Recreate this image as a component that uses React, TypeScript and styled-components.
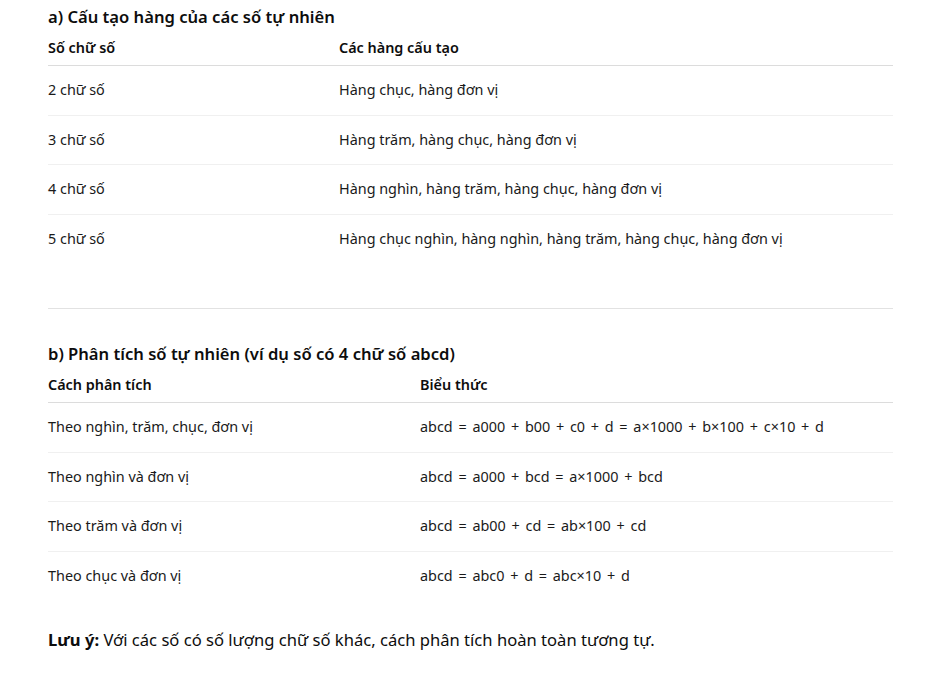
import React from 'react';
import styled, { createGlobalStyle } from 'styled-components';

const GlobalStyle = createGlobalStyle`
  body {
    margin: 0;
    background: #fff;
    font-family: 'Noto Sans', 'Open Sans', sans-serif;
    color: #0d0d0d;
  }
`;

const Page = styled.div`
  width: 845px;
  margin-left: 48px;
  padding-top: 5px;
`;

const Heading = styled.h3`
  margin: 0;
  font-size: 16.6px;
  line-height: 24px;
  font-weight: 600;
`;

const Table = styled.table`
  width: 100%;
  border-collapse: collapse;
  font-size: 14.4px;
  line-height: 20px;
`;

const HeadCell = styled.th<{ $w?: number }>`
  text-align: left;
  font-weight: 600;
  padding: 9px 0 7px;
  border-bottom: 1px solid #dcdcdc;
  width: ${(p) => (p.$w ? `${p.$w}px` : 'auto')};
`;

const Row = styled.tr`
  & + & td {
    border-top: 1px solid #f0f0f0;
  }
`;

const Cell = styled.td`
  padding: 14.25px 0;
  color: #1a1a1a;
`;

const Formula = styled(Cell)`
  word-spacing: 2px;
`;

const Divider = styled.hr`
  border: 0;
  border-top: 1px solid #e2e2e2;
  margin: 45px 0 33px;
`;

const Note = styled.p`
  margin: 28px 0 0;
  font-size: 16.6px;
  line-height: 24px;
`;

const structure = [
  ['2 chữ số', 'Hàng chục, hàng đơn vị'],
  ['3 chữ số', 'Hàng trăm, hàng chục, hàng đơn vị'],
  ['4 chữ số', 'Hàng nghìn, hàng trăm, hàng chục, hàng đơn vị'],
  ['5 chữ số', 'Hàng chục nghìn, hàng nghìn, hàng trăm, hàng chục, hàng đơn vị'],
];

const analysis = [
  ['Theo nghìn, trăm, chục, đơn vị', 'abcd = a000 + b00 + c0 + d = a×1000 + b×100 + c×10 + d'],
  ['Theo nghìn và đơn vị', 'abcd = a000 + bcd = a×1000 + bcd'],
  ['Theo trăm và đơn vị', 'abcd = ab00 + cd = ab×100 + cd'],
  ['Theo chục và đơn vị', 'abcd = abc0 + d = abc×10 + d'],
];

const App: React.FC = () => {
  return (
    <>
      <GlobalStyle />
      <Page>
        <Heading>a) Cấu tạo hàng của các số tự nhiên</Heading>
        <Table>
          <thead>
            <tr>
              <HeadCell $w={291}>Số chữ số</HeadCell>
              <HeadCell>Các hàng cấu tạo</HeadCell>
            </tr>
          </thead>
          <tbody>
            {structure.map(([a, b]) => (
              <Row key={a}>
                <Cell>{a}</Cell>
                <Cell>{b}</Cell>
              </Row>
            ))}
          </tbody>
        </Table>

        <Divider />

        <Heading>b) Phân tích số tự nhiên (ví dụ số có 4 chữ số abcd)</Heading>
        <Table>
          <thead>
            <tr>
              <HeadCell $w={372}>Cách phân tích</HeadCell>
              <HeadCell>Biểu thức</HeadCell>
            </tr>
          </thead>
          <tbody>
            {analysis.map(([a, b]) => (
              <Row key={a}>
                <Cell>{a}</Cell>
                <Formula>{b}</Formula>
              </Row>
            ))}
          </tbody>
        </Table>

        <Note>
          <strong>Lưu ý:</strong> Với các số có số lượng chữ số khác, cách phân tích hoàn toàn tương tự.
        </Note>
      </Page>
    </>
  );
};

export default App;
